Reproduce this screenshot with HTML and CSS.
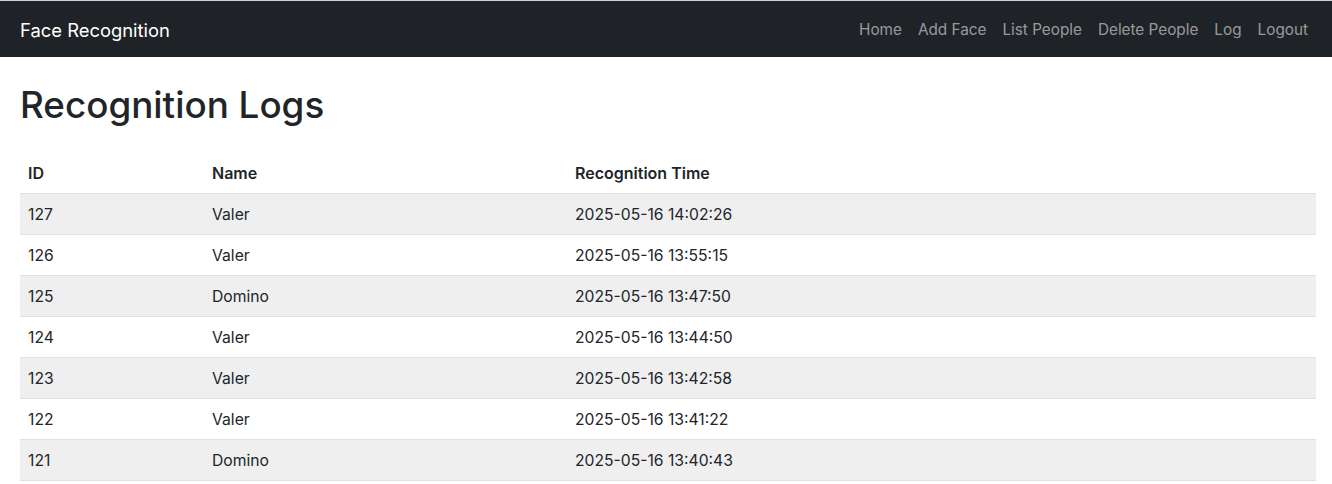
FILE: index.html
```html
<!DOCTYPE html>
<html lang="en">
<head>
<meta charset="utf-8">
<title>Recognition Logs</title>
<link rel="stylesheet" href="styles.css">
</head>
<body>
<nav class="navbar">
  <a class="brand" href="#">Face Recognition</a>
  <ul class="nav">
    <li><a href="#">Home</a></li>
    <li><a href="#">Add Face</a></li>
    <li><a href="#">List People</a></li>
    <li><a href="#">Delete People</a></li>
    <li><a href="#">Log</a></li>
    <li><a href="#">Logout</a></li>
  </ul>
</nav>
<main class="container">
  <h1 class="title">Recognition Logs</h1>
  <table class="table">
    <thead>
      <tr><th class="c-id">ID</th><th class="c-name">Name</th><th>Recognition Time</th></tr>
    </thead>
    <tbody>
      <tr><td>127</td><td>Valer</td><td>2025-05-16 14:02:26</td></tr>
      <tr><td>126</td><td>Valer</td><td>2025-05-16 13:55:15</td></tr>
      <tr><td>125</td><td>Domino</td><td>2025-05-16 13:47:50</td></tr>
      <tr><td>124</td><td>Valer</td><td>2025-05-16 13:44:50</td></tr>
      <tr><td>123</td><td>Valer</td><td>2025-05-16 13:42:58</td></tr>
      <tr><td>122</td><td>Valer</td><td>2025-05-16 13:41:22</td></tr>
      <tr><td>121</td><td>Domino</td><td>2025-05-16 13:40:43</td></tr>
    </tbody>
  </table>
</main>
</body>
</html>
```
FILE: styles.css
```css
* { box-sizing: border-box; }
html, body {
  margin: 0;
  padding: 0;
  background: #fff;
  color: #212529;
  font-family: Inter, "Noto Sans", "Liberation Sans", sans-serif;
  font-size: 16px;
  line-height: 1.5;
}
a { text-decoration: none; }
.navbar {
  display: flex;
  align-items: center;
  justify-content: space-between;
  height: 57px;
  border-top: 1px solid #d0d0d0;
  background: #1f2226;
  padding: 0 16px 0 20px;
}
.brand {
  color: #fff;
  font-size: 18.4px;
  line-height: 30px;
  padding-top: 1px;
}
.nav {
  display: flex;
  list-style: none;
  margin: 0;
  padding: 0;
}
.nav a {
  display: block;
  padding: 9px 8px 7px;
  color: rgba(255, 255, 255, 0.55);
  font-size: 15.3px;
}
.container {
  padding: 24px 16px 0 20px;
}
.title {
  margin: 0 0 24px;
  font-size: 36.8px;
  font-weight: 500;
  line-height: 48px;
}
.table {
  width: 100%;
  border-collapse: collapse;
}
.table th, .table td {
  text-align: left;
  padding: 9px 8px 7px;
  line-height: 24px;
  border-bottom: 1px solid #dee2e6;
  font-size: 15.7px;
}
.table th {
  font-weight: 600;
  font-size: 16px;
  padding: 8px 8px;
}
.c-id { width: 184px; }
.c-name { width: 363px; }
.table tbody tr:nth-child(odd) td { background: #efefef; }
```
